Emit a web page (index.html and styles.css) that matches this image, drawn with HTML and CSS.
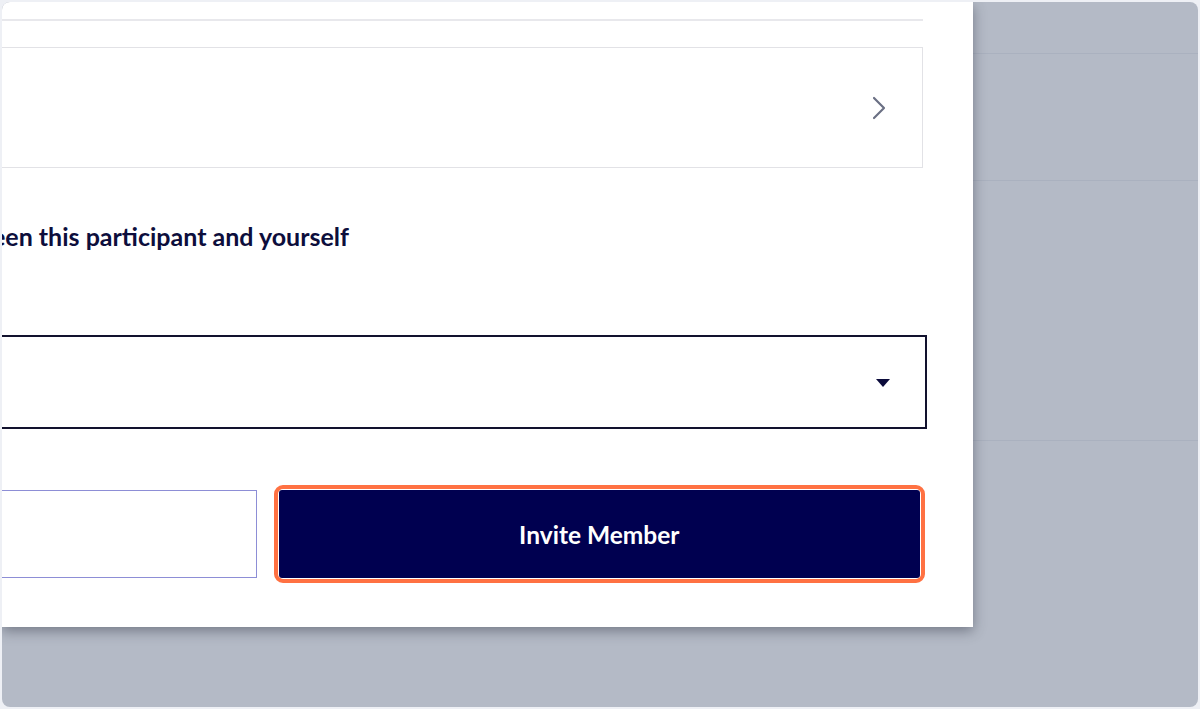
FILE: index.html
```html
<!DOCTYPE html>
<html lang="en">
<head>
    <meta charset="UTF-8">
    <meta name="viewport" content="width=device-width, initial-scale=1.0">
    <title>Invite Member</title>
    <link rel="stylesheet" href="styles.css">
</head>
<body>
    <div class="screen">
        <div class="modal">
            <div class="modal-body">
                <div class="divider"></div>

                <div class="picker-card">
                    <svg class="chevron" width="14" height="24" viewBox="0 0 14 24">
                        <path d="M2 2 L12 12 L2 22" fill="none" stroke="#6b7084" stroke-width="2.2" stroke-linecap="round" stroke-linejoin="round"/>
                    </svg>
                </div>

                <div class="field-label">
                    <span>Describe the relationship between this participant and yourself</span>
                </div>

                <div class="select-box">
                    <svg class="caret" width="16" height="10" viewBox="0 0 16 10">
                        <path d="M1 1 H15 L8 9 Z" fill="#0b0b3b"/>
                    </svg>
                </div>

                <div class="actions">
                    <button type="button" class="btn-cancel"></button>
                    <div class="focus-ring">
                        <button type="button" class="btn-invite">Invite Member</button>
                    </div>
                </div>
            </div>
        </div>

        <div class="backdrop">
            <div class="band band-top"></div>
            <div class="band band-mid"></div>
            <div class="band band-low"></div>
        </div>
    </div>
</body>
</html>
```

FILE: styles.css
```css
html, body {
    margin: 0;
    height: 100%;
}

body {
    background-color: #eef0f5;
    padding: 2px;
    box-sizing: border-box;
    font-family: Lato, "Open Sans", sans-serif;
}

.screen {
    height: 100%;
    display: flex;
    background-color: #b4bac6;
    border-radius: 8px;
    overflow: hidden;
}

.modal {
    width: 971px;
    height: 625px;
    flex-shrink: 0;
    background-color: #fff;
    box-shadow: 0 4px 12px rgba(40, 44, 60, 0.45);
    overflow: hidden;
    position: relative;
    z-index: 1;
}

.modal-body {
    width: 1223px;
    margin-left: -300px;
    padding-top: 17px;
}

.divider {
    width: 1221px;
    height: 2px;
    background-color: #e8e8ec;
}

.picker-card {
    width: 1219px;
    height: 119px;
    margin-top: 26px;
    border: 1px solid #e2e2e6;
    display: flex;
    align-items: center;
    justify-content: flex-end;
    box-sizing: content-box;
}

.chevron {
    margin-right: 36px;
}

/* label starts off-screen to the left, only its end is visible */
.field-label {
    display: flex;
    justify-content: flex-end;
    width: 647px;
    margin-top: 54px;
    color: #0d0e3c;
    font-size: 25px;
    font-weight: 700;
    white-space: nowrap;
    line-height: 28px;
}

.select-box {
    width: 1221px;
    height: 90px;
    margin-top: 85px;
    border: 2px solid #12122e;
    display: flex;
    align-items: center;
    justify-content: flex-end;
}

.caret {
    margin-right: 34px;
    margin-top: 2px;
}

.actions {
    display: flex;
    align-items: center;
    gap: 17px;
    margin-top: 56px;
}

.btn-cancel {
    width: 555px;
    height: 88px;
    background: #fff;
    border: 1px solid #8d8ed6;
}

.focus-ring {
    width: 642px;
    height: 88px;
    border: 4px solid #ff7142;
    border-radius: 9px;
    padding: 1px;
    background: #fff;
    display: flex;
}

.btn-invite {
    flex: 1;
    background-color: #000050;
    color: #fff;
    border: none;
    border-radius: 3px;
    font-family: Lato, "Open Sans", sans-serif;
    font-size: 24.5px;
    font-weight: 700;
}

.backdrop {
    flex: 1;
}

.band {
    border-bottom: 1px solid #aab1bf;
}

.band-top {
    height: 51px;
}

.band-mid {
    height: 126px;
}

.band-low {
    height: 259px;
}
```
